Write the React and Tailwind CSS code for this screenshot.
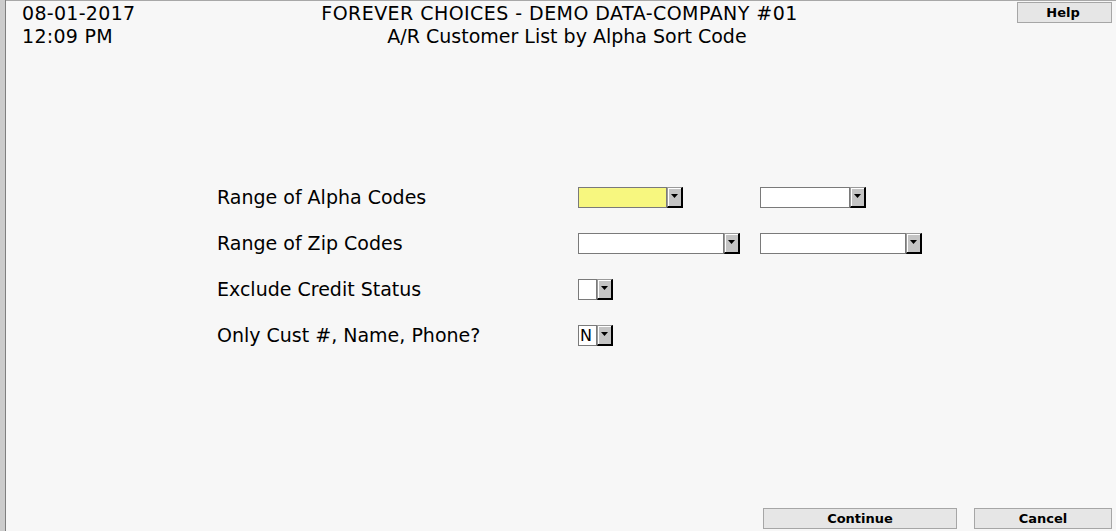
import React from "react";

const font = { fontFamily: '"DejaVu Sans", Verdana, sans-serif' };

function Arrow() {
  return (
    <div className="w-[16px] h-[21px] bg-[#c4c4c4] border-t border-l border-t-[#9a9a9a] border-l-[#9a9a9a] border-r-2 border-b-2 border-r-black border-b-black flex items-center justify-center shadow-[inset_1px_1px_0_#ffffff]">
      <svg width="8" height="5" viewBox="0 0 8 5">
        <path d="M0 0 H7 L3.5 4 Z" fill="#000" />
      </svg>
    </div>
  );
}

function Combo({ w, bg = "bg-white", value = "" }) {
  return (
    <div className="flex">
      <div
        className={`h-[21px] border border-[#7a7a7a] ${bg} text-[16px] leading-[19px] pl-[1px] text-black`}
        style={{ width: w }}
      >
        {value}
      </div>
      <Arrow />
    </div>
  );
}

export default function App() {
  return (
    <div className="w-[1116px] h-[531px] flex bg-[#f7f7f7] overflow-hidden text-black" style={font}>
      <div className="w-[5px] h-full bg-[#cccccc]" />
      <div className="w-[1px] h-full bg-[#7f7f7f]" />
      <div className="flex-1 flex flex-col border-t border-[#a8a8a8]">
        <div className="grid grid-cols-[1fr_auto_1fr] pl-[16px] pr-[4px] pt-[1px]">
          <div className="text-[19px] leading-[23px] tracking-[0.3px]">
            <div>08-01-2017</div>
            <div>12:09 PM</div>
          </div>
          <div className="text-[19px] leading-[23px] text-center">
            <div className="tracking-[0.45px] pr-[15px]">FOREVER CHOICES - DEMO DATA-COMPANY #01</div>
            <div>A/R Customer List by Alpha Sort Code</div>
          </div>
          <div className="flex justify-end">
            <button className="w-[95px] h-[21px] bg-[#e6e6e6] border border-[#a6a6a6] text-[13px] font-bold leading-[19px] pr-[3px]" style={font}>
              Help
            </button>
          </div>
        </div>

        <div className="mt-[126px] ml-[211px] grid grid-cols-[361px_auto] auto-rows-[46px] items-center">
          <div className="text-[19px]">Range of Alpha Codes</div>
          <div className="flex gap-[77px]">
            <Combo w="89px" bg="bg-[#f7f77f]" />
            <Combo w="90px" />
          </div>
          <div className="text-[19px]">Range of Zip Codes</div>
          <div className="flex gap-[20px]">
            <Combo w="146px" />
            <Combo w="146px" />
          </div>
          <div className="text-[19px]">Exclude Credit Status</div>
          <div className="flex">
            <Combo w="19px" />
          </div>
          <div className="text-[19px]">Only Cust #, Name, Phone?</div>
          <div className="flex">
            <Combo w="19px" value="N" />
          </div>
        </div>

        <div className="mt-auto mb-[2px] flex justify-end gap-[17px] pr-[4px]">
          <button className="w-[194px] h-[21px] bg-[#e6e6e6] border border-[#a6a6a6] text-[13px] font-bold leading-[19px]" style={font}>
            Continue
          </button>
          <button className="w-[138px] h-[21px] bg-[#e6e6e6] border border-[#a6a6a6] text-[13px] font-bold leading-[19px]" style={font}>
            Cancel
          </button>
        </div>
      </div>
    </div>
  );
}
